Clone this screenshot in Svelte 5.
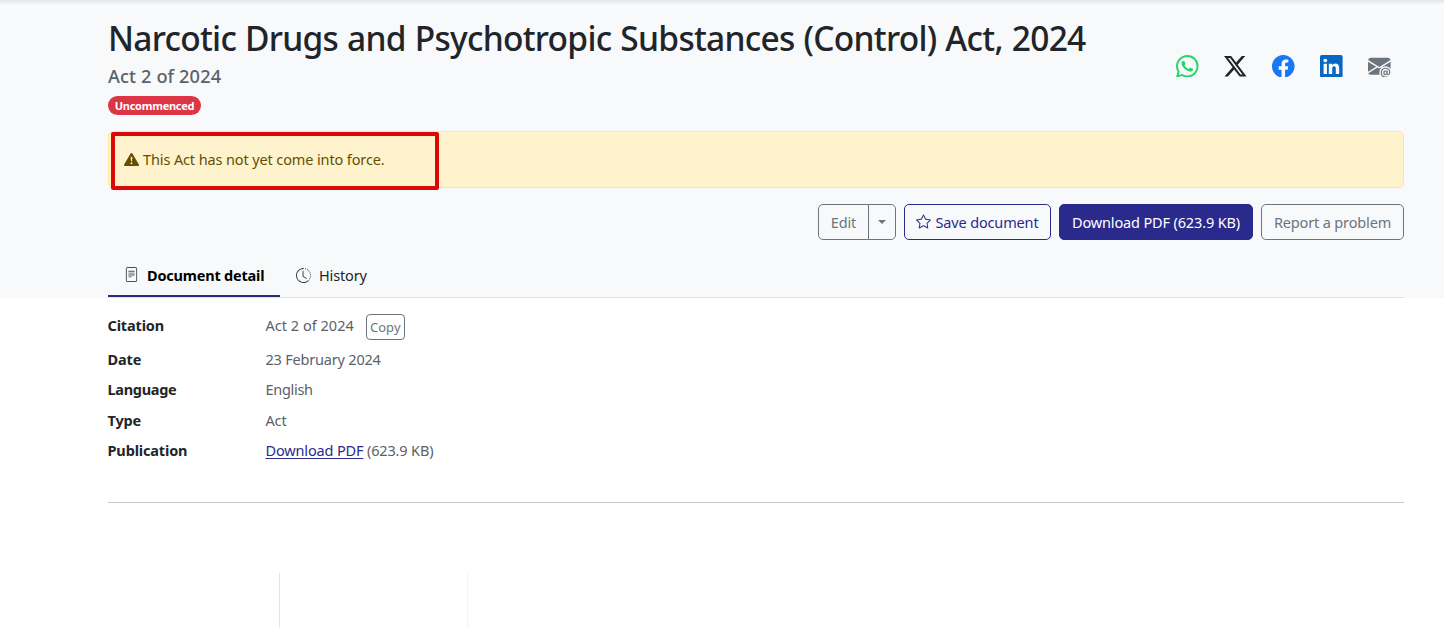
<script>
  const socials = [
    { name: 'WhatsApp', color: '#25d366', d: 'M13.601 2.326A7.85 7.85 0 0 0 7.994 0C3.627 0 .068 3.558.064 7.926c0 1.399.366 2.76 1.057 3.965L0 16l4.204-1.102a7.9 7.9 0 0 0 3.79.965h.004c4.368 0 7.926-3.558 7.93-7.93A7.9 7.9 0 0 0 13.6 2.326zM7.994 14.521a6.6 6.6 0 0 1-3.356-.92l-.24-.144-2.494.654.666-2.433-.156-.251a6.56 6.56 0 0 1-1.007-3.505c0-3.626 2.957-6.584 6.591-6.584a6.56 6.56 0 0 1 4.66 1.931 6.56 6.56 0 0 1 1.928 4.66c-.004 3.639-2.961 6.592-6.592 6.592m3.615-4.934c-.197-.099-1.17-.578-1.353-.646-.182-.065-.315-.099-.445.099-.133.197-.513.646-.627.775-.114.133-.232.148-.43.05-.197-.1-.836-.308-1.592-.985-.59-.525-.985-1.175-1.103-1.372-.114-.198-.011-.304.088-.403.087-.088.197-.232.296-.346.1-.114.133-.198.198-.33.065-.134.034-.248-.015-.347-.05-.099-.445-1.076-.612-1.47-.16-.389-.323-.335-.445-.34-.114-.007-.247-.007-.38-.007a.73.73 0 0 0-.529.247c-.182.198-.691.677-.691 1.654s.71 1.916.81 2.049c.098.133 1.394 2.132 3.383 2.992.47.205.84.326 1.129.418.475.152.904.129 1.246.08.38-.058 1.171-.48 1.338-.943.164-.464.164-.86.114-.943-.049-.084-.182-.133-.38-.232z' },
    { name: 'X', color: '#212529', d: 'M12.6.75h2.454l-5.36 6.142L16 15.25h-4.937l-3.867-5.07-4.425 5.07H.316l5.733-6.57L0 .75h5.063l3.495 4.633L12.601.75Zm-.86 13.028h1.36L4.323 2.145H2.865z' },
    { name: 'Facebook', color: '#1877f2', d: 'M16 8.049c0-4.446-3.582-8.05-8-8.05C3.58 0-.002 3.603-.002 8.05c0 4.017 2.926 7.347 6.75 7.951v-5.625h-2.03V8.05H6.75V6.275c0-2.017 1.195-3.131 3.022-3.131.876 0 1.791.157 1.791.157v1.98h-1.009c-.993 0-1.303.621-1.303 1.258v1.51h2.218l-.354 2.326H9.25V16c3.824-.604 6.75-3.934 6.75-7.951' },
    { name: 'LinkedIn', color: '#0a66c2', d: 'M0 1.146C0 .513.526 0 1.175 0h13.65C15.474 0 16 .513 16 1.146v13.708c0 .633-.526 1.146-1.175 1.146H1.175C.526 16 0 15.487 0 14.854zm4.943 12.248V6.169H2.542v7.225zm-1.2-8.212c.837 0 1.358-.554 1.358-1.248-.015-.709-.52-1.248-1.342-1.248S2.4 3.226 2.4 3.934c0 .694.521 1.248 1.327 1.248zm4.908 8.212V9.359c0-.216.016-.432.08-.586.173-.431.568-.878 1.232-.878.869 0 1.216.662 1.216 1.634v3.865h2.401V9.25c0-2.22-1.184-3.252-2.764-3.252-1.274 0-1.845.7-2.165 1.193v.025h-.016l.016-.025V6.169h-2.4c.03.678 0 7.225 0 7.225z' },
    { name: 'Email', color: '#6c757d', d: 'M2 2A2 2 0 0 0 .05 3.555L8 8.414l7.95-4.859A2 2 0 0 0 14 2zm-2 9.8V4.698l5.803 3.546zm6.761-2.97-6.57 4.026A2 2 0 0 0 2 14h6.256A4.5 4.5 0 0 1 8 12.5a4.49 4.49 0 0 1 1.606-3.446l-.367-.225L8 9.586zM16 9.671V4.697l-5.803 3.546.338.208A4.5 4.5 0 0 1 12.5 8c1.414 0 2.675.652 3.5 1.671M15.834 12.244c0 1.168-.577 2.025-1.587 2.025-.503 0-1.002-.228-1.12-.648h-.043c-.118.416-.543.643-1.015.643-.77 0-1.259-.542-1.259-1.434v-.529c0-.844.481-1.4 1.26-1.4.585 0 .87.333.953.63h.03v-.568h.905v2.19c0 .272.18.42.411.42.315 0 .639-.415.639-1.39v-.118c0-1.277-.95-2.326-2.484-2.326h-.04c-1.582 0-2.64 1.067-2.64 2.724v.157c0 1.867 1.237 2.654 2.57 2.654h.045c.507 0 .935-.07 1.18-.18v.731c-.219.1-.643.175-1.237.175h-.044C10.438 16 9 14.82 9 12.646v-.214C9 10.36 10.421 9 12.485 9h.035c2.12 0 3.314 1.43 3.314 3.034zm-4.04.21v.227c0 .586.227.8.581.8.31 0 .564-.17.564-.743v-.367c0-.516-.275-.708-.572-.708-.346 0-.573.245-.573.791' }
  ];
</script>

<header class="masthead">
  <div class="container">
    <div class="top">
      <div class="titles">
        <h1>Narcotic Drugs and Psychotropic Substances (Control) Act, 2024</h1>
        <h2>Act 2 of 2024</h2>
        <span class="badge">Uncommenced</span>
      </div>
      <div class="socials">
        {#each socials as s}
          <svg viewBox="0 0 16 16" fill={s.color} role="img" aria-label={s.name}><path d={s.d} /></svg>
        {/each}
      </div>
    </div>

    <div class="alert">
      <svg viewBox="0 0 16 16" fill="currentColor"><path d="M8.982 1.566a1.13 1.13 0 0 0-1.96 0L.165 13.233c-.457.778.091 1.767.98 1.767h13.713c.889 0 1.438-.99.98-1.767zM8 5c.535 0 .954.462.9.995l-.35 3.507a.552.552 0 0 1-1.1 0L7.1 5.995A.905.905 0 0 1 8 5m.002 6a1 1 0 1 1 0 2 1 1 0 0 1 0-2" /></svg>
      <span>This Act has not yet come into force.</span>
      <div class="marker"></div>
    </div>

    <div class="actions">
      <div class="group">
        <button class="btn edit">Edit</button>
        <button class="btn toggle" aria-label="More"><i class="caret"></i></button>
      </div>
      <button class="btn save">
        <svg viewBox="0 0 16 16" fill="currentColor"><path d="M2.866 14.85c-.078.444.36.791.746.593l4.39-2.256 4.389 2.256c.386.198.824-.149.746-.592l-.83-4.73 3.522-3.356c.33-.314.16-.888-.282-.95l-4.898-.696L8.465.792a.513.513 0 0 0-.927 0L5.354 5.12l-4.898.696c-.441.062-.612.636-.283.95l3.523 3.356-.83 4.73zm4.905-2.767-3.686 1.894.694-3.957a.56.56 0 0 0-.163-.505L1.71 6.745l4.052-.576a.53.53 0 0 0 .393-.288L8 2.223l1.847 3.658a.53.53 0 0 0 .393.288l4.052.575-2.906 2.77a.56.56 0 0 0-.163.506l.694 3.957-3.686-1.894a.5.5 0 0 0-.461 0z" /></svg>
        Save document
      </button>
      <button class="btn primary">Download PDF (623.9 KB)</button>
      <button class="btn report">Report a problem</button>
    </div>

    <nav class="tabs">
      <div class="tab active">
        <svg viewBox="0 0 16 16" fill="currentColor"><path d="M5 4a.5.5 0 0 0 0 1h6a.5.5 0 0 0 0-1zm-.5 2.5A.5.5 0 0 1 5 6h6a.5.5 0 0 1 0 1H5a.5.5 0 0 1-.5-.5M5 8a.5.5 0 0 0 0 1h6a.5.5 0 0 0 0-1zm0 2a.5.5 0 0 0 0 1h3a.5.5 0 0 0 0-1z" /><path d="M2 2a2 2 0 0 1 2-2h8a2 2 0 0 1 2 2v12a2 2 0 0 1-2 2H4a2 2 0 0 1-2-2zm10-1H4a1 1 0 0 0-1 1v12a1 1 0 0 0 1 1h8a1 1 0 0 0 1-1V2a1 1 0 0 0-1-1" /></svg>
        <span>Document detail</span>
      </div>
      <div class="tab">
        <svg viewBox="0 0 16 16" fill="currentColor"><path d="M8.515 1.019A7 7 0 0 0 8 1V0a8 8 0 0 1 .589.022zm2.004.45a7 7 0 0 0-.985-.299l.219-.976q.576.129 1.126.342zm1.37.71a7 7 0 0 0-.439-.27l.493-.87a8 8 0 0 1 .979.654l-.615.789a7 7 0 0 0-.418-.302zm1.834 1.79a7 7 0 0 0-.653-.796l.724-.69q.406.429.747.91zm.744 1.352a7 7 0 0 0-.214-.468l.893-.45a8 8 0 0 1 .45 1.088l-.95.313a7 7 0 0 0-.179-.483m.53 2.507a7 7 0 0 0-.1-1.025l.985-.17q.1.58.116 1.17zm-.131 1.538q.05-.254.081-.51l.993.123a8 8 0 0 1-.23 1.155l-.964-.267q.069-.247.12-.501m-.952 2.379q.276-.436.486-.908l.914.405q-.24.54-.555 1.038zm-.964 1.205q.183-.183.35-.378l.758.653a8 8 0 0 1-.401.432z" /><path d="M8 1a7 7 0 1 0 4.95 11.95l.707.707A8.001 8.001 0 1 1 8 0z" /><path d="M7.5 3a.5.5 0 0 1 .5.5v5.21l3.248 1.856a.5.5 0 0 1-.496.868l-3.5-2A.5.5 0 0 1 7 9V3.5a.5.5 0 0 1 .5-.5" /></svg>
        <span>History</span>
      </div>
    </nav>
  </div>
</header>

<main class="container">
  <dl>
    <dt>Citation</dt>
    <dd class="cite"><span>Act 2 of 2024</span><button class="copy">Copy</button></dd>
    <dt>Date</dt>
    <dd class="date">23 February 2024</dd>
    <dt class="lang">Language</dt>
    <dd class="lang">English</dd>
    <dt>Type</dt>
    <dd>Act</dd>
    <dt>Publication</dt>
    <dd><a href="#pdf">Download PDF</a> (623.9 KB)</dd>
  </dl>
  <div class="columns">
    <div class="side"></div>
    <div class="toc"></div>
    <div class="body"></div>
  </div>
</main>

<style>
  :global(body) {
    background: #fff;
    color: #212529;
    font: 14.5px/22px "Noto Sans", "Open Sans", sans-serif;
    letter-spacing: -0.15px;
    overflow: hidden;
  }
  svg { display: block; flex: none; }
  h1, h2, dl, dd { margin: 0; }
  .container { width: 1296px; margin-left: 108px; }
  .masthead {
    box-sizing: border-box;
    height: 298px;
    padding-top: 18px;
    background: linear-gradient(#e6e8ea, #e9ebee 2px, #f6f7f9 4px, #f8f9fb 5px);
  }
  .top { display: flex; justify-content: space-between; height: 113px; }
  h1 {
    font-size: 33.5px;
    font-weight: 500;
    line-height: 41px;
    letter-spacing: -0.72px;
    word-spacing: 0.9px;
    white-space: nowrap;
  }
  h2 {
    margin-top: 6px;
    font-size: 18.2px;
    font-weight: 500;
    line-height: 22px;
    letter-spacing: 0.12px;
    color: #5b6167;
  }
  .badge {
    display: block;
    width: 93px;
    height: 19px;
    margin-top: 9px;
    border-radius: 10px;
    background: #dc3545;
    color: #fff;
    font-size: 11px;
    font-weight: 700;
    line-height: 19px;
    letter-spacing: -0.25px;
    text-align: center;
  }
  .socials { display: flex; gap: 25.4px; padding: 36.8px 13px 0 0; }
  .socials svg { width: 22.6px; height: 22.6px; }

  .alert {
    position: relative;
    box-sizing: border-box;
    display: flex;
    align-items: center;
    gap: 4px;
    height: 57px;
    padding: 0 15px 1px;
    border: 1px solid #ffe69c;
    border-radius: 5px;
    background: #fff3cd;
    color: #664d03;
    letter-spacing: -0.12px;
  }
  .alert svg { width: 15px; height: 15px; }
  .alert span { margin-top: -1px; }
  .marker {
    position: absolute;
    left: 2px;
    top: 0;
    width: 320px;
    height: 50px;
    border: 4px solid #d90a08;
    border-radius: 2px;
  }

  .actions { display: flex; justify-content: flex-end; gap: 8px; margin-top: 16px; }
  button { font-family: inherit; letter-spacing: inherit; background: transparent; padding: 0; }
  .btn {
    box-sizing: border-box;
    display: flex;
    align-items: center;
    justify-content: center;
    height: 36px;
    border: 1px solid #6c757d;
    border-radius: 5px;
    color: #6c757d;
    font-size: 14.5px;
    line-height: 22px;
    white-space: nowrap;
  }
  .group { display: flex; }
  .edit { width: 51px; border-radius: 5px 0 0 5px; }
  .toggle { width: 28px; margin-left: -1px; border-radius: 0 5px 5px 0; }
  .caret { border: 4.5px solid transparent; border-top-color: currentColor; border-bottom: 0; }
  .save { width: 147px; gap: 4px; border-color: #2a2a8c; color: #2a2a8c; }
  .save svg { width: 15px; height: 15px; margin-top: -1px; }
  .primary { width: 194px; border-color: #2a2a8c; background: #2a2a8c; color: #fff; }
  .report { width: 143px; }

  .tabs { display: flex; height: 43px; margin-top: 14px; border-bottom: 1px solid #dee2e6; }
  .tab { box-sizing: border-box; display: flex; align-items: center; gap: 8px; height: 43px; padding: 0 16px; white-space: nowrap; }
  .tab svg { width: 15px; height: 15px; }
  .active { width: 172px; border-bottom: 2px solid #2f2a75; color: #000; font-weight: 700; letter-spacing: -0.2px; }
  .active svg { color: #495057; }
  .tab span { margin-top: -1px; }
  .active span { margin-top: 0; }
  .tab:not(.active) svg { color: #33383d; }

  dl {
    display: grid;
    grid-template-columns: 157.5px 1fr;
    grid-template-rows: 34px 30px 31px 30px 30px;
    height: 188px;
    padding-top: 16px;
    border-bottom: 1px solid #c8c9ca;
  }
  dt { margin-left: -0.5px; font-weight: 700; }
  dd { color: #5b6167; }
  .cite { display: flex; gap: 12px; letter-spacing: 0.02px; }
  .date { letter-spacing: -0.2px; }
  .lang { letter-spacing: -0.3px; }
  a { color: #2a2a8c; text-underline-offset: 2px; text-decoration-thickness: 1px; }
  .copy {
    box-sizing: border-box;
    width: 39px;
    height: 26px;
    border: 1px solid #6c757d;
    border-radius: 4px;
    color: #6c757d;
    font-size: 13px;
    line-height: 24px;
  }
  .columns { display: grid; grid-template-columns: 172px 188px 1fr; height: 55px; margin-top: 70px; }
  .side { border-right: 1px solid #e4e5e6; }
  .toc { border-right: 1px solid #f5f5f6; }
</style>
